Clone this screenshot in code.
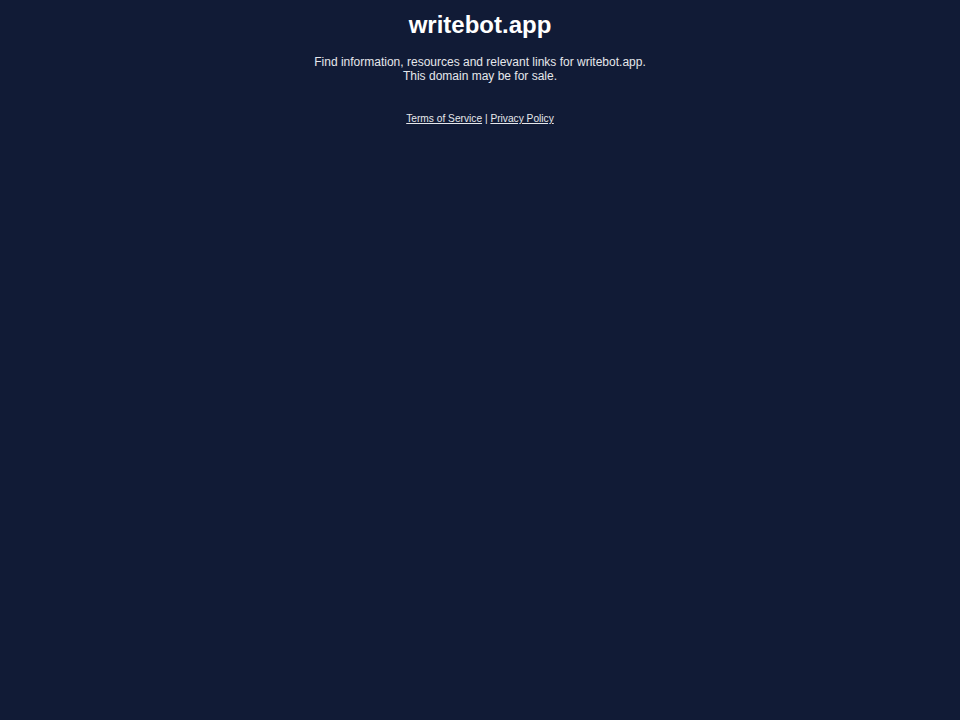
export default function App() {
  return (
    <div className="min-h-[720px] bg-[#111b36] text-[#e5e7eb] text-center" style={{ fontFamily: '"Liberation Sans", Arial, sans-serif' }}>
      <div className="pt-[10px]">
        <h1 className="text-[24px] font-bold leading-[30px] text-white">writebot.app</h1>
        <p className="mt-[15px] text-[12px] leading-[14px]">
          Find information, resources and relevant links for writebot.app.
          <br />
          This domain may be for sale.
        </p>
        <p className="mt-[30px] text-[10.2px] leading-[12px]">
          <a className="underline" href="#">Terms of Service</a> | <a className="underline" href="#">Privacy Policy</a>
        </p>
      </div>
    </div>
  );
}
